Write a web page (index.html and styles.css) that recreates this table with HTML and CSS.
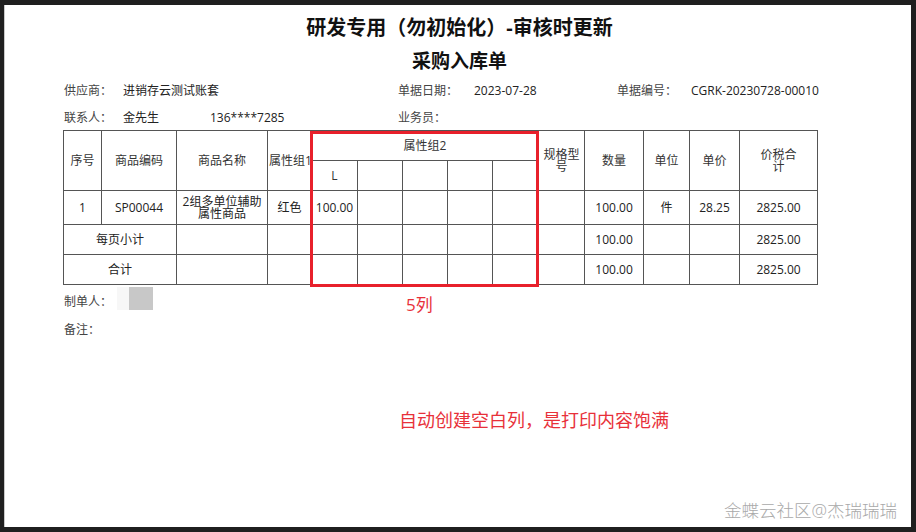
FILE: index.html
```html
<!DOCTYPE html>
<html lang="zh-CN">
<head>
<meta charset="utf-8">
<title>采购入库单</title>
<link rel="stylesheet" href="styles.css">
</head>
<body>
<div class="page">
  <h1 class="title">研发专用（勿初始化）-审核时更新</h1>
  <h2 class="subtitle">采购入库单</h2>

  <div class="info">
    <span class="lbl">供应商：</span>
    <span class="val span2">进销存云测试账套</span>
    <span class="lbl">单据日期：</span>
    <span class="val">2023-07-28</span>
    <span class="lbl">单据编号：</span>
    <span class="val">CGRK-20230728-00010</span>

    <span class="lbl">联系人：</span>
    <span class="val">金先生</span>
    <span class="val">136****7285</span>
    <span class="lbl">业务员：</span>
    <span class="val"></span>
    <span class="lbl"></span>
    <span class="val"></span>
  </div>

  <div class="table-wrap">
    <table class="grid">
      <colgroup>
        <col class="c-no"><col class="c-code"><col class="c-name"><col class="c-attr1">
        <col class="c-sub1"><col class="c-sub"><col class="c-sub"><col class="c-sub"><col class="c-sub1">
        <col class="c-spec"><col class="c-qty"><col class="c-unit"><col class="c-price"><col class="c-total">
      </colgroup>
      <thead>
        <tr class="h1">
          <th rowspan="2">序号</th>
          <th rowspan="2">商品编码</th>
          <th rowspan="2">商品名称</th>
          <th rowspan="2" class="clip">属性组1</th>
          <th colspan="5">属性组2</th>
          <th rowspan="2" class="tight">规格型<br>号</th>
          <th rowspan="2">数量</th>
          <th rowspan="2">单位</th>
          <th rowspan="2">单价</th>
          <th rowspan="2" class="tight">价税合<br>计</th>
        </tr>
        <tr class="h2">
          <th>L</th><th></th><th></th><th></th><th></th>
        </tr>
      </thead>
      <tbody>
        <tr class="r-data">
          <td>1</td>
          <td>SP00044</td>
          <td class="tight">2组多单位辅助<br>属性商品</td>
          <td>红色</td>
          <td>100.00</td><td></td><td></td><td></td><td></td>
          <td></td>
          <td>100.00</td>
          <td>件</td>
          <td>28.25</td>
          <td>2825.00</td>
        </tr>
        <tr class="r-sum">
          <td colspan="2">每页小计</td>
          <td></td><td></td>
          <td></td><td></td><td></td><td></td><td></td>
          <td></td>
          <td>100.00</td><td></td><td></td><td>2825.00</td>
        </tr>
        <tr class="r-sum">
          <td colspan="2">合计</td>
          <td></td><td></td>
          <td></td><td></td><td></td><td></td><td></td>
          <td></td>
          <td>100.00</td><td></td><td></td><td>2825.00</td>
        </tr>
      </tbody>
    </table>
    <div class="red-box"></div>
    <div class="note-cols">5列</div>
  </div>

  <div class="foot-row maker-row">
    <span class="lbl maker">制单人：</span>
    <span class="sign"></span>
  </div>
  <div class="foot-row remark-row">
    <span class="lbl">备注：</span>
  </div>

  <div class="note-main">自动创建空白列，是打印内容饱满</div>
  <div class="watermark">金蝶云社区@杰瑞瑞瑞</div>
</div>
</body>
</html>
```

FILE: styles.css
```css
* { box-sizing: border-box; }

html, body {
  margin: 0;
  padding: 0;
  background: #1f1f1f;
}

body {
  font-family: "Open Sans", "Noto Sans CJK SC", "Noto Sans", sans-serif;
  color: #222;
}

.page {
  position: relative;
  margin: 5px 0 0 4px;
  width: 907px;
  height: 522px;
  background: #fff;
  border-left: 1px solid #c9c9c9;
  padding-top: 11px;
}

.title {
  margin: 0;
  text-align: center;
  font-size: 20px;
  line-height: 24px;
  font-weight: 700;
  color: #111;
  padding-left: 3px;
}

.subtitle {
  margin: 9px 0 0;
  text-align: center;
  font-size: 19px;
  line-height: 24px;
  font-weight: 700;
  color: #111;
  padding-left: 3px;
}

.info {
  margin-top: 8px;
  padding-left: 59px;
  display: grid;
  grid-template-columns: 59px 87px 188px 76px 143px 74px auto;
  grid-auto-rows: 20px;
  row-gap: 7px;
  font-size: 12px;
  line-height: 20px;
}

.info .span2 { grid-column: span 2; }

.lbl { color: #444; }
.val { color: #222; }

.table-wrap {
  position: relative;
  margin: 2px 0 0 58px;
  width: 755px;
}

.grid {
  border-collapse: collapse;
  table-layout: fixed;
  width: 755px;
  font-size: 12px;
}

.grid th, .grid td {
  border: 1px solid #555;
  text-align: center;
  vertical-align: middle;
  padding: 0;
  font-weight: 400;
  line-height: 14px;
}

.grid th { color: #333; }

.c-no { width: 38px; }
.c-code { width: 75px; }
.c-name { width: 91px; }
.c-attr1 { width: 44px; }
.c-sub1 { width: 46px; }
.c-sub { width: 45px; }
.c-spec { width: 46px; }
.c-qty { width: 59px; }
.c-unit { width: 46px; }
.c-price { width: 50px; }
.c-total { width: 78px; }

.grid .clip { white-space: nowrap; overflow: visible; text-align: left; padding-left: 1px; }

.h1 th { height: 30px; }
.h2 th { height: 30px; }
.r-data td { height: 34px; }
.r-sum td { height: 30px; }

.grid .tight { line-height: 12px; }

.red-box {
  position: absolute;
  left: 247px;
  top: 1px;
  width: 229px;
  height: 156px;
  border: 3px solid #e8202b;
}

.note-cols {
  position: absolute;
  left: 343px;
  top: 164px;
  font-size: 17px;
  line-height: 22px;
  color: #e8313a;
}

.foot-row {
  display: flex;
  align-items: flex-start;
  padding-left: 59px;
  font-size: 12px;
  line-height: 20px;
}

.maker-row { margin-top: 2px; }
.remark-row { margin-top: 8px; }

.maker { padding-top: 5px; }

.sign {
  width: 24px;
  height: 23px;
  margin-left: 17px;
  background: #c8c8c8;
  box-shadow: -12px 0 0 #f7f7f7;
}

.note-main {
  position: absolute;
  left: 394px;
  top: 403px;
  font-size: 18px;
  line-height: 24px;
  color: #e8313a;
}

.watermark {
  position: absolute;
  right: 14px;
  top: 494px;
  font-size: 17.5px;
  line-height: 22px;
  color: #a9a9a9;
  font-weight: 300;
}
```
